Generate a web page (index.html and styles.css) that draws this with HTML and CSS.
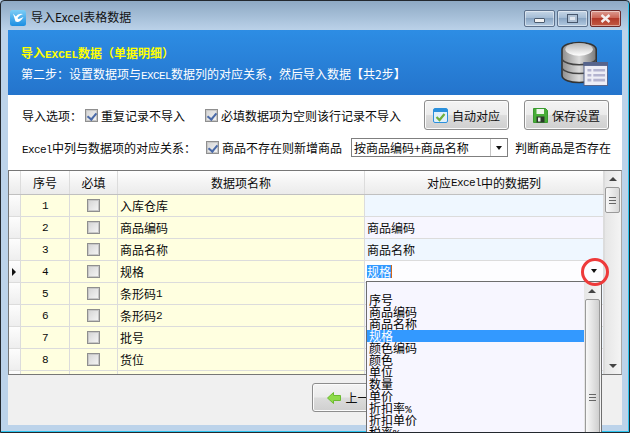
FILE: index.html
```html
<!DOCTYPE html>
<html lang="zh">
<head>
<meta charset="utf-8">
<title>导入Excel表格数据</title>
<link rel="stylesheet" href="styles.css">
</head>
<body>
<div class="window">
  <div class="titlebar">
    <svg class="app-icon" width="16" height="16" viewBox="0 0 16 16"><defs><linearGradient id="ai" x1="0" y1="0" x2="0" y2="1"><stop offset="0" stop-color="#7ccdf6"/><stop offset="1" stop-color="#1a8ee2"/></linearGradient></defs><rect width="16" height="16" rx="2.5" fill="url(#ai)"/><path d="M3 3.5 L5.5 11.5 Q9.5 13.5 13.5 7 L10 8.5 Q8.5 9.5 7.5 8 Q9.5 5 13 4 Q8 3 5.8 6.5 Z" fill="#fff"/></svg>
    <span class="title">导入Excel表格数据</span>
    <div class="caption">
      <div class="cap-btn"><i class="min-glyph"></i></div>
      <div class="cap-btn"><i class="max-glyph"></i></div>
      <div class="cap-btn close"><svg width="11" height="9" viewBox="0 0 11 9"><path d="M1.5 1 L9.5 8 M9.5 1 L1.5 8" stroke="#f4eeee" stroke-width="2.4"/></svg></div>
    </div>
  </div>
  <div class="client">
    <header class="banner">
      <div class="banner-text">
        <div class="banner-title">导入<span class="mono">EXCEL</span>数据（单据明细）</div>
        <div class="banner-sub">第二步：设置数据项与<span class="mono">EXCEL</span>数据列的对应关系，然后导入数据【共2步】</div>
      </div>
      <svg class="db-icon" width="47" height="47" viewBox="0 0 48 48">
        <defs>
          <linearGradient id="dbg" x1="0" y1="0" x2="1" y2="0"><stop offset="0" stop-color="#8d8d8d"/><stop offset=".5" stop-color="#dcdcdc"/><stop offset="1" stop-color="#777"/></linearGradient>
          <linearGradient id="dbt" x1="0" y1="0" x2="0" y2="1"><stop offset="0" stop-color="#b4b4b4"/><stop offset="1" stop-color="#fff"/></linearGradient>
        </defs>
        <path d="M1 11 C1 1 36 1 36 11 V37 C36 47 1 47 1 37 Z" fill="url(#dbg)" stroke="#333" stroke-width="1.6"/>
        <path d="M1 21 C6 28 31 28 36 21 M1 30 C6 37 31 37 36 30" fill="none" stroke="#444" stroke-width="1.6"/>
        <ellipse cx="18.5" cy="10.5" rx="14" ry="6.5" fill="url(#dbt)"/>
        <rect x="23.5" y="24" width="24" height="23.5" fill="#eeeef6" stroke="#56648c"/>
        <rect x="23" y="23.5" width="25" height="4" fill="#56648c"/>
        <path d="M27 32 H31 M33 32 H45 M27 37 H31 M33 37 H45 M27 42 H31 M33 42 H45" stroke="#b4b4d0" stroke-width="2.6"/>
      </svg>
    </header>
    <section class="options">
      <div class="opt-row first">
        <span class="opt-label">导入选项：</span>
        <label class="chk"><i class="box checked"></i>重复记录不导入</label>
        <label class="chk second"><i class="box checked"></i>必填数据项为空则该行记录不导入</label>
        <button class="btn auto"><svg width="15" height="15" viewBox="0 0 15 15"><rect x=".5" y=".5" width="14" height="14" rx="1.5" fill="#dff0fb" stroke="#2a90dc"/><rect x="1" y="1" width="13" height="3" fill="#2a90dc"/><path d="M3.5 9 L6.5 12 L11.5 6" fill="none" stroke="#6fae3c" stroke-width="2.2"/></svg>自动对应</button>
        <button class="btn save"><svg width="15" height="15" viewBox="0 0 15 15"><path d="M.5 .5 H12.5 L14.5 2.5 V14.5 H.5 Z" fill="#48ad38" stroke="#3a9a30"/><rect x="3.5" y="1" width="7.5" height="5" fill="#eef6ea"/><rect x="3.5" y="8.5" width="8" height="6" fill="#2c3a2c"/><rect x="5" y="9.5" width="2.5" height="4" fill="#e8e8e8"/></svg>保存设置</button>
      </div>
      <div class="opt-row secondrow">
        <span class="map-label"><span class="mono">Excel</span>中列与数据项的对应关系：</span>
        <label class="chk third"><i class="box checked"></i>商品不存在则新增商品</label>
        <div class="select"><span class="select-val">按商品编码+商品名称</span><span class="select-arrow"><i class="tri"></i></span></div>
        <span class="judge">判断商品是否存在</span>
      </div>
    </section>
    <section class="grid">
      <div class="grid-body">
        <div class="row head">
          <div class="c0"></div><div class="c1">序号</div><div class="c2">必填</div><div class="c3">数据项名称</div><div class="c4">对应<span class="mono">Excel</span>中的数据列</div>
        </div>
        <div class="row alt"><div class="c0"></div><div class="c1"><span class="mono">1</span></div><div class="c2"><i class="box"></i></div><div class="c3">入库仓库</div><div class="c4"></div></div>
        <div class="row"><div class="c0"></div><div class="c1"><span class="mono">2</span></div><div class="c2"><i class="box"></i></div><div class="c3">商品编码</div><div class="c4">商品编码</div></div>
        <div class="row alt"><div class="c0"></div><div class="c1"><span class="mono">3</span></div><div class="c2"><i class="box"></i></div><div class="c3">商品名称</div><div class="c4">商品名称</div></div>
        <div class="row"><div class="c0"><i class="cur"></i></div><div class="c1"><span class="mono">4</span></div><div class="c2"><i class="box"></i></div><div class="c3">规格</div><div class="c4 editing"><span class="sel">规格</span></div></div>
        <div class="row alt"><div class="c0"></div><div class="c1"><span class="mono">5</span></div><div class="c2"><i class="box"></i></div><div class="c3">条形码<span class="mono">1</span></div><div class="c4"></div></div>
        <div class="row"><div class="c0"></div><div class="c1"><span class="mono">6</span></div><div class="c2"><i class="box"></i></div><div class="c3">条形码<span class="mono">2</span></div><div class="c4"></div></div>
        <div class="row alt"><div class="c0"></div><div class="c1"><span class="mono">7</span></div><div class="c2"><i class="box"></i></div><div class="c3">批号</div><div class="c4"></div></div>
        <div class="row"><div class="c0"></div><div class="c1"><span class="mono">8</span></div><div class="c2"><i class="box"></i></div><div class="c3">货位</div><div class="c4"></div></div>
        <div class="row alt"><div class="c0"></div><div class="c1"></div><div class="c2"></div><div class="c3"></div><div class="c4"></div></div>
      </div>
      <div class="vscroll">
        <i class="up"></i>
        <div class="thumb"><b></b></div>
        <i class="down"></i>
      </div>
    </section>
    <footer class="footer">
      <button class="btn prev"><svg width="14" height="12" viewBox="0 0 14 12"><path d="M0.5 6 L6.5 .5 V3.5 H13.5 V8.5 H6.5 V11.5 Z" fill="#8edb48" stroke="#6cba30"/></svg>上一步</button>
    </footer>
  </div>
  <div class="dropdown">
    <div class="dd-list">
      <div class="dd-item"></div>
      <div class="dd-item">序号</div>
      <div class="dd-item">商品编码</div>
      <div class="dd-item">商品名称</div>
      <div class="dd-item on">规格</div>
      <div class="dd-item">颜色编码</div>
      <div class="dd-item">颜色</div>
      <div class="dd-item">单位</div>
      <div class="dd-item">数量</div>
      <div class="dd-item">单价</div>
      <div class="dd-item">折扣率<span class="mono">%</span></div>
      <div class="dd-item">折扣单价</div>
      <div class="dd-item">税率<span class="mono">%</span></div>
    </div>
    <div class="dd-scroll"><i class="up"></i><div class="dd-thumb"><b></b></div></div>
  </div>
  <div class="combo-arrow"><i class="tri"></i></div>
  <div class="ring"></div>
</div>
</body>
</html>
```
FILE: styles.css
```css
* { box-sizing: border-box; }
html, body { margin: 0; padding: 0; }
body { width: 630px; height: 433px; overflow: hidden; font-family: "Noto Sans CJK SC", "Liberation Sans", sans-serif; font-size: 12px; color: #0a0a0a; background: #b9d2ea; }
i { display: block; font-style: normal; }
.mono { font-family: "Liberation Mono", monospace; font-size: 11px; letter-spacing: -0.6px; }
.window { position: relative; width: 630px; height: 433px; overflow: hidden; display: flex; flex-direction: column; background: linear-gradient(#8ea9c4 0, #bcd3ea 30px); border: 1px solid #23282e; border-radius: 4px 4px 0 0; box-shadow: inset -1px -1px 0 #2cc4ee; }
.titlebar { height: 29px; flex: none; display: flex; align-items: center; padding: 1px 0 0 9px; }
.app-icon { margin-right: 5px; margin-top: 3px; }
.title { font-size: 12px; color: #111; }
.caption { margin-left: auto; margin-right: 8px; margin-top: 5px; display: flex; gap: 2px; }
.cap-btn { width: 31px; height: 17px; border: 1px solid #5d718c; border-radius: 2px; background: linear-gradient(#c6d6e6, #a4bcd5 45%, #8aa6c4 50%, #b4cbe2); display: flex; align-items: center; justify-content: center; box-shadow: inset 0 0 0 1px rgba(255,255,255,.45); }
.cap-btn.close { background: linear-gradient(#dc9c92, #cc6656 45%, #b23a2a 50%, #c25a44); border-color: #6c2a2a; }
.min-glyph { width: 11px; height: 5px; margin-top: 4px; background: #f2f2f2; border: 1px solid #4c5c70; border-radius: 1px; }
.max-glyph { width: 11px; height: 9px; background: #e0e6ee; border: 1px solid #46566c; box-shadow: inset 0 0 0 2px #aec0d4; }
.client { width: 614px; margin-left: 7px; height: 395px; flex: none; background: #f0f0f0; display: flex; flex-direction: column; }
.banner { height: 65px; flex: none; background: linear-gradient(#2d8de4, #2474cc); display: flex; padding: 14px 0 0 13px; color: #fff; position: relative; }
.banner-title { color: #ffff00; font-weight: 700; font-size: 12px; line-height: 18px; }
.banner-title .mono { font-weight: 700; letter-spacing: 0; font-size: 11px; }
.banner-sub { font-size: 12px; line-height: 19px; }
.db-icon { position: absolute; right: 14px; top: 9px; }
.options { height: 75px; flex: none; background: #fff; padding-left: 14px; position: relative; }
.opt-row { display: flex; align-items: center; white-space: nowrap; }
.opt-row.first { height: 38px; padding-top: 2px; }
.opt-row.secondrow { height: 26px; padding-top: 3px; }
.opt-label { width: 63px; }
.map-label { width: 184px; }
.chk { display: flex; align-items: center; gap: 3px; }
.chk.second { margin-left: 20px; }
.box { width: 13px; height: 13px; border: 1px solid #8f8f8f; background: linear-gradient(135deg, #d4d4d4, #f6f6f6); box-shadow: inset 0 0 0 1px #c8c8c8; position: relative; flex: none; }
.box.checked::after { content: ""; position: absolute; left: 3px; top: 1px; width: 4px; height: 7px; border: solid #4a6aa8; border-width: 0 2px 2px 0; transform: rotate(40deg); }
.btn { display: flex; align-items: center; justify-content: center; gap: 4px; font: inherit; color: #111; height: 30px; border: 1px solid #8d8d8d; border-radius: 3px; background: linear-gradient(#f4f4f4, #ebebeb 48%, #dcdcdc 52%, #cfcfcf); box-shadow: inset 0 0 0 1px #fbfbfb; padding: 0; }
.btn.auto { width: 85px; margin-left: 23px; }
.btn.save { width: 85px; margin-left: 15px; }
.select { margin-left: 9px; width: 157px; height: 19px; display: flex; background: #fff; border: 1px solid #7f7f7f; }
.select-val { flex: 1; line-height: 17px; padding-left: 2px; overflow: hidden; }
.select-arrow { width: 17px; border-left: 1px solid #c6c6c6; display: flex; align-items: center; justify-content: center; }
.tri { width: 0; height: 0; border: solid transparent; border-width: 4px 3px 0; border-top-color: #111; }
.judge { margin-left: 7px; }
.grid { height: 205px; flex: none; display: flex; border: 1px solid #777; border-right-color: #a8a8a8; background: #f0f0f0; overflow: hidden; }
.grid-body { width: 595px; flex: none; }
.row { display: grid; grid-template-columns: 12px 49px 48px 247px 239px; height: 22px; border-bottom: 1px solid #dcdcdc; }
.row.head { height: 24px; background: linear-gradient(#ffffff, #f4f4f4 50%, #ebebeb); border-bottom: 1px solid #c0c0c0; }
.row > div { display: flex; align-items: center; border-right: 1px solid #dcdcdc; }
.row.head > div { justify-content: center; }
.c0 { background: linear-gradient(#fdfdfd, #eeeeee); padding-left: 3px; }
.row.head .c0 { background: transparent; }
.row:not(.head) .c1, .row:not(.head) .c2, .row:not(.head) .c3 { background: #ffffe0; }
.row:not(.head) .c1, .row:not(.head) .c2 { justify-content: center; }
.row:not(.head) .c3, .row:not(.head) .c4 { padding-left: 2px; }
.row:not(.head) .c4 { background: #f7f6ff; }
.row.alt:not(.head) .c4 { background: #eff7ff; }
.row:not(.head) .c4.editing { background: #fdfdff; }
.sel { display: inline-block; height: 13px; line-height: 13px; background: #3399ff; color: #fff; box-shadow: 1px 0 0 #d06a1c; }
.cur { width: 0; height: 0; border: solid transparent; border-width: 4px 0 4px 4px; border-left-color: #111; }
.vscroll { flex: 1; position: relative; background: linear-gradient(90deg, #e6e6e6, #f4f4f4); border-left: 1px solid #dcdcdc; }
.up, .down { position: absolute; left: 4px; width: 0; height: 0; border: solid transparent; }
.up { border-width: 0 4px 4px; border-bottom-color: #444; }
.down { border-width: 4px 4px 0; border-top-color: #444; }
.vscroll .up { top: 6px; }
.vscroll .down { bottom: 6px; }
.thumb { position: absolute; left: 0; top: 16px; width: 15px; height: 26px; border: 1px solid #9a9a9a; border-radius: 2px; background: linear-gradient(90deg, #f8f8f8, #d8d8d8); display: flex; align-items: center; justify-content: center; }
.thumb b, .dd-thumb b { display: block; width: 7px; height: 7px; border-top: 1px solid #666; border-bottom: 1px solid #666; background: linear-gradient(#666, #666) center / 100% 1px no-repeat; }
.footer { flex: 1; background: #f0f0f0; position: relative; display: flex; padding: 8px 0 0 304px; }
.btn.prev { width: 85px; height: 29px; }
.dropdown { position: absolute; left: 365px; top: 280px; width: 236px; height: 160px; background: #f7f6ff; border: 1px solid #6e6e6e; display: flex; }
.dd-list { flex: 1; }
.dd-item { height: 12px; line-height: 12px; font-size: 12px; padding-left: 2px; color: #000; white-space: nowrap; }
.dd-item.on { background: #3399ff; color: #fff; }
.dd-scroll { width: 17px; flex: none; position: relative; background: linear-gradient(90deg, #e6e6e6, #f4f4f4); }
.dd-scroll .up { top: 7px; left: 4px; }
.dd-thumb { position: absolute; left: 1px; top: 17px; width: 15px; height: 196px; border: 1px solid #9a9a9a; border-radius: 2px; background: linear-gradient(90deg, #f8f8f8, #cfcfcf); display: flex; align-items: center; justify-content: center; }
.combo-arrow { position: absolute; left: 590px; top: 268px; }
.ring { position: absolute; left: 580px; top: 257px; width: 28px; height: 28px; border: 3px solid #ee3a3a; border-radius: 50%; }
```
